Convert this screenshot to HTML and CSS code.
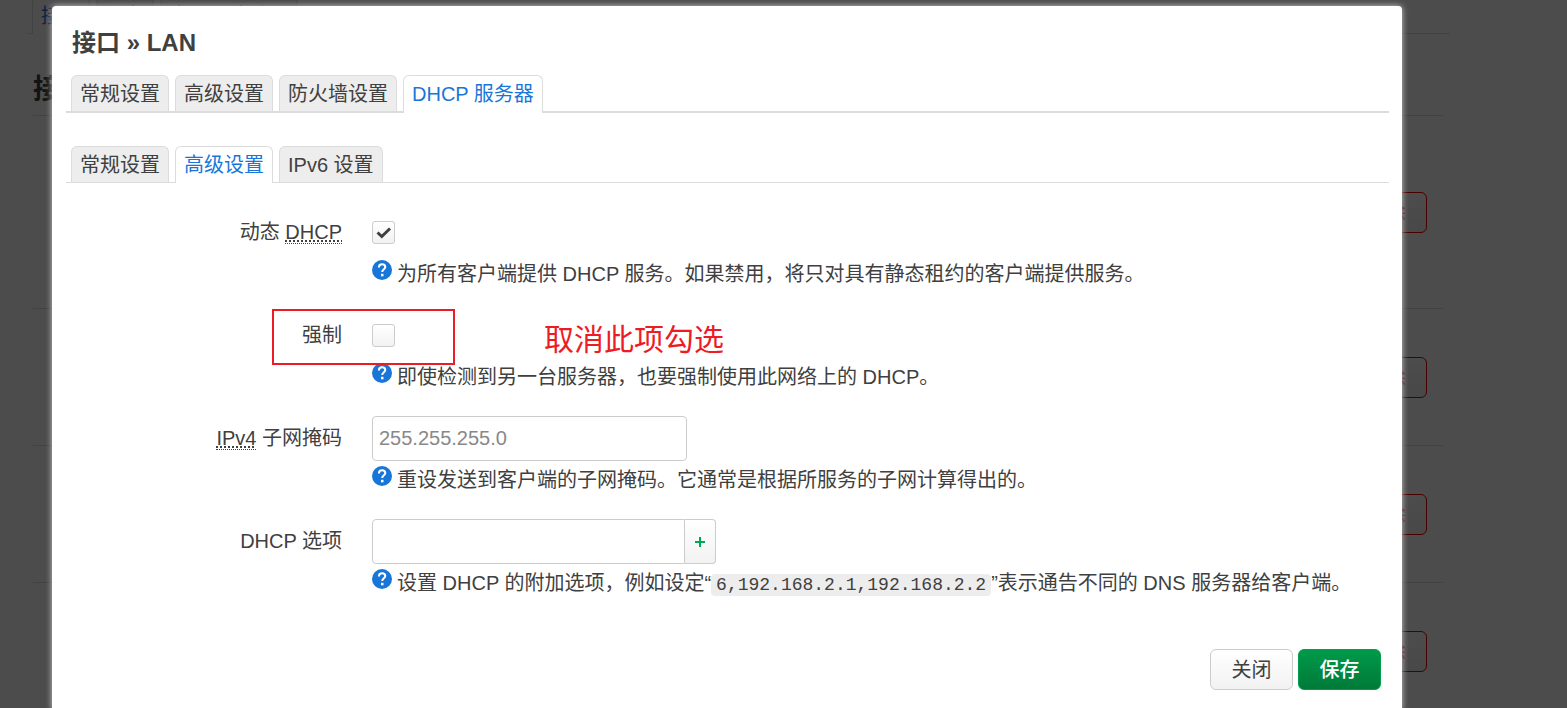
FILE: index.html
```html
<!DOCTYPE html>
<html lang="zh-CN">

<head>
  <meta charset="UTF-8">
  <meta name="viewport" content="width=device-width, initial-scale=1.0">
  <title>接口 » LAN</title>
  <link rel="stylesheet" href="styles.css">
</head>

<body>
  <!-- interface list, dimmed by the overlay -->
  <div class="page" aria-hidden="true">
    <ul class="tabs page-tabs">
      <li class="active"><a href="#" tabindex="-1">接口</a></li>
      <li><a href="#" tabindex="-1">设备</a></li>
      <li><a href="#" tabindex="-1">全局网络选项</a></li>
    </ul>
    <div class="page-body">
      <h2>接口</h2>
      <div class="iface first"><button class="btn remove" tabindex="-1">删除</button></div>
      <div class="iface"><button class="btn remove" tabindex="-1">删除</button></div>
      <div class="iface"><button class="btn remove" tabindex="-1">删除</button></div>
      <div class="iface"><button class="btn remove" tabindex="-1">删除</button></div>
    </div>
  </div>

  <div class="overlay">
    <div class="modal" role="dialog" aria-labelledby="modal-title">
      <h4 id="modal-title">接口 » LAN</h4>

      <ul class="tabs main-tabs">
        <li><a href="#">常规设置</a></li>
        <li><a href="#">高级设置</a></li>
        <li><a href="#">防火墙设置</a></li>
        <li class="active"><a href="#">DHCP 服务器</a></li>
      </ul>

      <ul class="tabs sub-tabs">
        <li><a href="#">常规设置</a></li>
        <li class="active"><a href="#">高级设置</a></li>
        <li><a href="#">IPv6 设置</a></li>
      </ul>

      <form class="options">
        <div class="row">
          <label class="title" for="dynamic">动态 <abbr title="动态主机配置协议">DHCP</abbr></label>
          <div class="field">
            <div class="control"><input type="checkbox" id="dynamic" checked></div>
            <div class="description">
              <svg class="help" viewBox="0 0 20 20"><circle cx="10" cy="10" r="10" /><path d="M6.9 7.4C6.9 5.4 8.2 4.3 10.1 4.3C12 4.3 13.3 5.4 13.3 7.1C13.3 9.2 10.2 9.4 10.2 12.1" /><rect x="9" y="13.8" width="2.5" height="2.5" /></svg>
              <span>为所有客户端提供 DHCP 服务。如果禁用，将只对具有静态租约的客户端提供服务。</span>
            </div>
          </div>
        </div>

        <div class="row">
          <label class="title" for="force">强制</label>
          <div class="field">
            <div class="control"><input type="checkbox" id="force"></div>
            <div class="description">
              <svg class="help" viewBox="0 0 20 20"><circle cx="10" cy="10" r="10" /><path d="M6.9 7.4C6.9 5.4 8.2 4.3 10.1 4.3C12 4.3 13.3 5.4 13.3 7.1C13.3 9.2 10.2 9.4 10.2 12.1" /><rect x="9" y="13.8" width="2.5" height="2.5" /></svg>
              <span>即使检测到另一台服务器，也要强制使用此网络上的 DHCP。</span>
            </div>
          </div>
          <div class="mark"></div>
          <div class="mark-note">取消此项勾选</div>
        </div>

        <div class="row">
          <label class="title" for="netmask"><abbr title="互联网协议第 4 版">IPv4</abbr> 子网掩码</label>
          <div class="field">
            <div class="control"><input type="text" id="netmask" placeholder="255.255.255.0"></div>
            <div class="description">
              <svg class="help" viewBox="0 0 20 20"><circle cx="10" cy="10" r="10" /><path d="M6.9 7.4C6.9 5.4 8.2 4.3 10.1 4.3C12 4.3 13.3 5.4 13.3 7.1C13.3 9.2 10.2 9.4 10.2 12.1" /><rect x="9" y="13.8" width="2.5" height="2.5" /></svg>
              <span>重设发送到客户端的子网掩码。它通常是根据所服务的子网计算得出的。</span>
            </div>
          </div>
        </div>

        <div class="row">
          <label class="title" for="dhcp-option">DHCP 选项</label>
          <div class="field">
            <div class="control">
              <input type="text" id="dhcp-option" class="joined">
              <button type="button" class="add" aria-label="添加"><svg viewBox="0 0 12 12"><path d="M6 1V11M1 6H11" /></svg></button>
            </div>
            <div class="description">
              <svg class="help" viewBox="0 0 20 20"><circle cx="10" cy="10" r="10" /><path d="M6.9 7.4C6.9 5.4 8.2 4.3 10.1 4.3C12 4.3 13.3 5.4 13.3 7.1C13.3 9.2 10.2 9.4 10.2 12.1" /><rect x="9" y="13.8" width="2.5" height="2.5" /></svg>
              <span>设置 DHCP 的附加选项，例如设定“<code>6,192.168.2.1,192.168.2.2</code>”表示通告不同的 DNS 服务器给客户端。</span>
            </div>
          </div>
        </div>
      </form>

      <div class="actions">
        <button class="btn">关闭</button>
        <button class="btn save">保存</button>
      </div>
    </div>
  </div>
</body>

</html>
```
FILE: styles.css
```css
* {
  box-sizing: border-box;
}

body {
  margin: 0;
  min-height: 100vh;
  overflow: hidden;
  background: #fff;
  color: #404040;
  font-family: "Liberation Sans", "Noto Sans CJK SC", sans-serif;
  font-size: 20px;
  line-height: 30px;
}

input,
button {
  font-family: inherit;
  font-size: 20px;
  color: #404040;
}

a {
  color: inherit;
  text-decoration: none;
}

/* tabs */
.tabs {
  display: flex;
  gap: 6px;
  margin: 0;
  padding: 0 5px;
  list-style: none;
  border-bottom: 1px solid #dcdcdc;
}

.tabs li {
  height: 36px;
  background: #ededed;
  border: 1px solid #dcdcdc;
  border-bottom: none;
  border-radius: 6px 6px 0 0;
}

.tabs a {
  display: block;
  padding: 3px 8px;
}

.tabs .active {
  height: 37px;
  margin-bottom: -1px;
  background: #fff;
  color: #1976d9;
}

.main-tabs {
  border-bottom-width: 2px;
  margin-bottom: 33px;
}

.main-tabs .active {
  height: 38px;
  margin-bottom: -2px;
}

/* page behind the dialog */
.page {
  padding: 0 117px 0 27px;
}

.page-tabs {
  margin-top: -3px;
}

.page-body {
  padding: 0 7px 0 6px;
}

.page h2 {
  margin: 0;
  padding: 41px 0 10px;
  font-size: 28px;
  line-height: 30px;
}

.iface {
  display: flex;
  align-items: center;
  justify-content: flex-end;
  height: 137px;
  padding-right: 16px;
  border-top: 1px solid #ddd;
}

.iface.first {
  height: 193px;
}

.overlay {
  position: absolute;
  inset: 0;
  padding: 6px 165px 0 52px;
  overflow: hidden;
  background: rgba(0, 0, 0, .7);
}

.modal {
  padding: 22px 13px 20px 14px;
  background: #fff;
  border-radius: 4px 4px 0 0;
  box-shadow: 0 0 6px #ccc;
}

.modal h4 {
  margin: 0 6px 17px;
  font-size: 24px;
  line-height: 30px;
}

/* options */
.options {
  padding-top: 27px;
}

.row {
  position: relative;
  display: flex;
  gap: 30px;
  margin-bottom: 24px;
}

.title {
  width: 276px;
  flex-shrink: 0;
  line-height: 45px;
  text-align: right;
}

abbr {
  text-decoration: underline dotted;
  border-bottom: 1px dotted #404040;
}

.field {
  flex: 1;
}

.control {
  display: flex;
  align-items: center;
  height: 45px;
}

input[type="text"] {
  width: 315px;
  height: 45px;
  padding: 0 6px;
  background: #fff;
  border: 1px solid #ccc;
  border-radius: 4px;
}

input::placeholder {
  color: #888;
}

input[type="text"].joined {
  width: 313px;
  border-radius: 4px 0 0 4px;
}

input[type="checkbox"] {
  appearance: none;
  width: 23px;
  height: 23px;
  margin: 0;
  background: linear-gradient(#fff, #f2f2f2);
  border: 1px solid #ccc;
  border-radius: 3px;
}

input[type="checkbox"]:checked {
  background: url("data:image/svg+xml,%3Csvg xmlns='http://www.w3.org/2000/svg' viewBox='0 0 21 21'%3E%3Cpath d='M4.5 10.5L8.8 14.5L17 6.5' fill='none' stroke='%23404040' stroke-width='3'/%3E%3C/svg%3E"), linear-gradient(#fff, #f2f2f2);
}

.add {
  width: 31px;
  height: 45px;
  padding: 0;
  border: 1px solid #ccc;
  border-left: none;
  border-radius: 0 4px 4px 0;
  background: linear-gradient(#fff, #f2f2f2);
}

.add svg {
  display: block;
  width: 12px;
  height: 12px;
  margin: auto;
  stroke: #00a854;
  stroke-width: 2;
}

.description {
  display: flex;
  gap: 5px;
  padding-top: 4px;
}

.help {
  width: 20px;
  height: 20px;
  margin-top: 1px;
  flex-shrink: 0;
  fill: #1976d9;
}

.help path {
  fill: none;
  stroke: #fff;
  stroke-width: 2;
}

.help rect {
  fill: #fff;
}

code {
  padding: 1px 5px;
  background: #ededed;
  border-radius: 4px;
  font-family: "Liberation Mono", monospace;
  font-size: 18px;
}

/* red marking round the option to turn off */
.mark {
  position: absolute;
  top: -4px;
  left: 206px;
  width: 183px;
  height: 56px;
  border: 2px solid #ed1c24;
}

.mark-note {
  position: absolute;
  top: 12px;
  left: 478px;
  color: #ed1c24;
  font-size: 30px;
}

/* buttons */
.actions {
  display: flex;
  justify-content: flex-end;
  gap: 5px;
  padding: 25px 8px 0 0;
}

.btn {
  min-width: 83px;
  height: 41px;
  padding: 0 20px 2px;
  border: 1px solid #ccc;
  border-radius: 6px;
  background: linear-gradient(#fff, #f2f2f2);
}

.btn.save {
  color: #fff;
  font-weight: 500;
  border-color: #00a04a;
  background: linear-gradient(#009a4a, #007a38);
}

.btn.remove {
  color: #f00000;
  border-color: #f00000;
}
```
